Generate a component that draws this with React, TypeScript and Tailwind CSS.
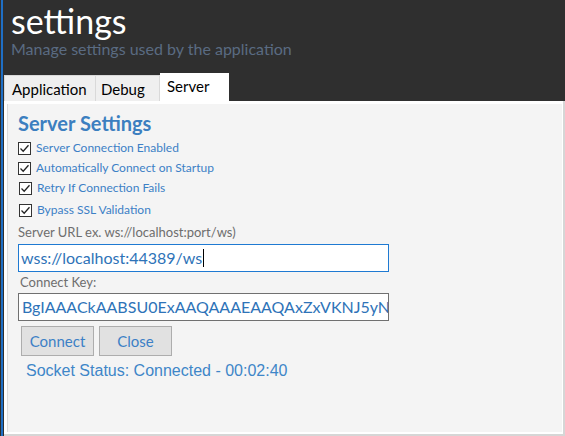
import React from "react";

const font = "font-['Segoe_UI','Lato','Noto_Sans',sans-serif]";

function Check({ label, className = "" }: { label: string; className?: string }) {
  return (
    <label className={`flex items-center gap-[5px] h-[20px] ${className}`}>
      <span className="w-[13px] h-[13px] border border-[#333333] bg-white flex items-center justify-center shrink-0">
        <svg width="11" height="11" viewBox="0 0 11 11">
          <path d="M1.5 5.5 L4.2 8.2 L9.5 2.3" fill="none" stroke="#222" strokeWidth="1.3" />
        </svg>
      </span>
      <span className="text-[12px] text-[#3c80c6]">{label}</span>
    </label>
  );
}

export default function App() {
  return (
    <div className={`w-[565px] h-[436px] bg-[#2f2f2f] flex pl-[1px] overflow-hidden ${font}`}>
      {/* blue window edge */}
      <div className="w-[2px] bg-[#1f6fc5] shrink-0" />

      <div className="ml-[1px] flex-1 flex flex-col">
        {/* Header */}
        <div className="pl-[7px] pt-[2px] h-[73px]">
          <h1 className="text-[34px] leading-[38px] text-white">settings</h1>
          <p className="text-[16px] leading-[20px] text-[#5a6b82] -mt-[1px]">
            Manage settings used by the application
          </p>
        </div>

        {/* Tabs */}
        <div className="flex items-end h-[28px]">
          <div className="w-[92px] h-[26px] bg-[#efefef] border border-b-0 border-[#d9d9d9] pl-[7px] text-[15px] leading-[26px] text-black">
            Application
          </div>
          <div className="w-[64px] h-[26px] bg-[#efefef] border border-l-0 border-b-0 border-[#d9d9d9] pl-[5px] text-[15px] leading-[26px] text-black">
            Debug
          </div>
          <div className="w-[69px] h-[28px] bg-white pl-[7px] text-[15px] leading-[27px] text-black">
            Server
          </div>
        </div>

        {/* Panel */}
        <div className="flex-1 bg-white border-r-2 border-b-2 border-[#d6d6d6] pt-[3px] pl-[3px] pr-[1px] pb-[2px] flex">
          <div className="flex-1 bg-[#f4f4f4] border-l border-[#dcdcdc] pl-[10px] pt-[7px]">
            <h2 className="text-[20px] leading-[24px] font-bold text-[#3c7fc0]">Server Settings</h2>
            <div className="flex flex-col mt-[3px]">
              <Check label="Server Connection Enabled" />
              <Check label="Automatically Connect on Startup" />
              <Check label="Retry If Connection Fails" className="pl-[1px]" />
              <Check label="Bypass SSL Validation" className="pl-[1px] mt-[2px]" />
            </div>

            <div className="mt-[3px] text-[13px] leading-[18px] text-[#6e6e6e]">
              Server URL ex. ws://localhost:port/ws)
            </div>
            <div className="mt-[3px] w-[371px] h-[28px] bg-white border border-[#1f7ad2] pl-[2px] flex items-center text-[16px] text-[#2e73b8] overflow-hidden whitespace-nowrap">
              wss://localhost:44389/ws
              <span className="w-[1px] h-[18px] bg-black ml-[1px]" />
            </div>

            <div className="mt-[1px] pl-[2px] text-[13px] leading-[18px] text-[#6e6e6e]">Connect Key:</div>
            <div className="mt-[2px] w-[371px] h-[28px] bg-white border border-[#707070] pl-[3px] flex items-center text-[16px] text-[#2e73b8] overflow-hidden whitespace-nowrap">
              BgIAAACkAABSU0ExAAQAAAEAAQAxZxVKNJ5yNbvMkLqT0eYvd3s
            </div>

            <div className="flex gap-[5px] mt-[5px] pl-[3px]">
              <button className="w-[73px] h-[30px] bg-[#e1e1e1] border border-[#adadad] text-[15px] text-[#3c80c6]">
                Connect
              </button>
              <button className="w-[73px] h-[30px] bg-[#e1e1e1] border border-[#adadad] text-[15px] text-[#3c80c6]">
                Close
              </button>
            </div>

            <div className="mt-[4px] pl-[8px] text-[16px] leading-[22px] text-[#3e86c8] font-['Liberation_Sans',sans-serif]">
              Socket Status: Connected - 00:02:40
            </div>
          </div>
        </div>
      </div>
    </div>
  );
}
